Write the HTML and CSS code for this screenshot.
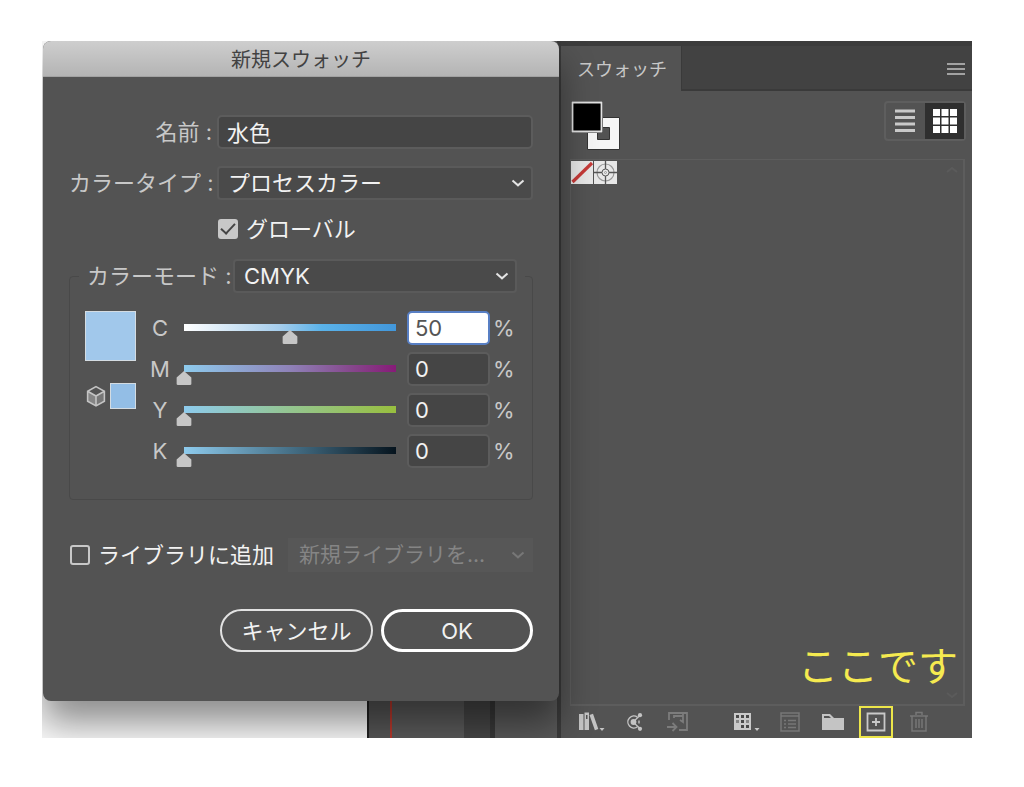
FILE: index.html
```html
<!DOCTYPE html>
<html lang="ja">
<head>
<meta charset="utf-8">
<meta name="viewport" content="width=device-width, initial-scale=1">
<title>新規スウォッチ</title>
<link rel="stylesheet" href="styles.css">
</head>
<body>
<main class="workspace">
  <div class="canvas">
    <form class="dialog">
      <h1 class="dialog-title">新規スウォッチ</h1>
      <div class="dialog-body">
        <div class="field-row">
          <label class="field-label" for="name">名前 :</label>
          <input class="text-field" id="name" type="text" value="水色">
        </div>
        <div class="field-row type-row">
          <label class="field-label" for="type">カラータイプ :</label>
          <div class="picker">
            <select id="type"><option>プロセスカラー</option></select>
            <svg class="chevron" viewBox="0 0 14 8"><path d="M1.500 1.500 7 6.300l5.500-4.800"/></svg>
          </div>
        </div>
        <div class="check-row">
          <input class="check" id="global" type="checkbox" checked>
          <label for="global">グローバル</label>
        </div>

        <fieldset class="mode">
          <legend>
            <div class="mode-head">
              <label class="mode-label" for="mode">カラーモード :</label>
              <div class="picker">
                <select id="mode"><option>CMYK</option></select>
                <svg class="chevron" viewBox="0 0 14 8"><path d="M1.500 1.500 7 6.300l5.500-4.800"/></svg>
              </div>
            </div>
          </legend>
          <div class="mode-body">
            <div class="previews">
              <div class="preview-large"></div>
              <div class="preview-line">
                <svg class="cube" viewBox="0 0 20 21"><path class="cube-side" d="M10 10.500 18 6v9.500l-8 4.500z"/><path class="cube-left" d="M10 10.500 2 6v9.500l8 4.500z"/><path class="cube-line" d="M10 1.500 18 6v9.500l-8 4.500-8-4.500V6zM2 6l8 4.500L18 6M10 10.500V20"/></svg>
                <div class="preview-small"></div>
              </div>
            </div>
            <div class="channels">
              <div class="channel">
                <label for="c">C</label>
                <input class="slider cyan" type="range" min="0" max="100" value="50" aria-label="C">
                <input class="amount active" id="c" type="text" value="50">
                <span>%</span>
              </div>
              <div class="channel">
                <label for="m">M</label>
                <input class="slider magenta" type="range" min="0" max="100" value="0" aria-label="M">
                <input class="amount" id="m" type="text" value="0">
                <span>%</span>
              </div>
              <div class="channel">
                <label for="y">Y</label>
                <input class="slider yellow" type="range" min="0" max="100" value="0" aria-label="Y">
                <input class="amount" id="y" type="text" value="0">
                <span>%</span>
              </div>
              <div class="channel">
                <label for="k">K</label>
                <input class="slider black" type="range" min="0" max="100" value="0" aria-label="K">
                <input class="amount" id="k" type="text" value="0">
                <span>%</span>
              </div>
            </div>
          </div>
        </fieldset>

        <div class="library-row">
          <input class="check" id="library" type="checkbox">
          <label for="library">ライブラリに追加</label>
          <div class="picker disabled">
            <select disabled aria-label="ライブラリ"><option>新規ライブラリを...</option></select>
            <svg class="chevron" viewBox="0 0 14 8"><path d="M1.500 1.500 7 6.300l5.500-4.800"/></svg>
          </div>
        </div>

        <div class="actions">
          <button class="pill" type="button">キャンセル</button>
          <button class="pill primary" type="button">OK</button>
        </div>
      </div>
    </form>
  </div>

  <section class="panel">
    <header class="tabs">
      <button class="tab" type="button">スウォッチ</button>
      <button class="menu" type="button" aria-label="メニュー">
        <svg width="18" height="14" viewBox="0 0 18 14"><path d="M0 2h18M0 7h18M0 12h18" stroke="#a2a2a2" stroke-width="1.800"/></svg>
      </button>
    </header>
    <div class="panel-head">
      <svg width="50" height="50" viewBox="0 0 50 50">
        <path d="M16.500 16.500h32v32h-32z" fill="#f5f5f5" stroke="#333"/>
        <path d="M26.500 26.500h12v12h-12z" fill="#535353" stroke="#333"/>
        <path d="M0 0h32v32H0z" fill="#333"/>
        <path d="M1.500 1.500h29v29h-29z" fill="#000" stroke="#e2e2e2" stroke-width="1.800"/>
      </svg>
      <div class="views">
        <button class="view" type="button" aria-label="リスト表示">
          <svg width="24" height="26" viewBox="0 0 24 26"><path d="M1 3h20M1 9.500h20M1 16h20M1 22.500h20" stroke="#c9c9c9" stroke-width="3"/></svg>
        </button>
        <button class="view selected" type="button" aria-label="サムネイル表示">
          <svg width="24" height="24" viewBox="0 0 24 24" fill="#fff"><path d="M0 0h7v7H0zM8.500 0h7v7h-7zM17 0h7v7h-7zM0 8.500h7v7H0zM8.500 8.500h7v7h-7zM17 8.500h7v7h-7zM0 17h7v7H0zM8.500 17h7v7h-7zM17 17h7v7h-7z"/></svg>
        </button>
      </div>
    </div>
    <div class="swatches">
      <div class="swatch-line">
        <svg width="46" height="23" viewBox="0 0 46 23">
          <path d="M0 0h22v23H0zM23 0h23v23H23z" fill="#e8e8e8"/>
          <path d="M1.500 21 21 2" stroke="#c63a38" stroke-width="3.200"/>
          <g fill="none" stroke="#555"><circle cx="34.500" cy="11.500" r="8.500" stroke="#999" stroke-width="1.200"/><circle cx="34.500" cy="11.500" r="3.500"/><circle cx="34.500" cy="11.500" r="1" stroke="#999"/><path d="M34.500 0v8M34.500 15v8M23 11.500h8M38 11.500h8" stroke-width="1.300"/></g>
        </svg>
        <svg class="scroll-mark" width="12" height="8" viewBox="0 0 12 8"><path d="m1 6 5-4 5 4"/></svg>
      </div>
      <div class="swatch-foot">
        <p class="note">ここです</p>
        <svg class="scroll-mark" width="12" height="8" viewBox="0 0 12 8"><path d="m1 2 5 4 5-4"/></svg>
      </div>
    </div>
    <footer class="tools">
      <div class="tool-group">
        <button class="tool" type="button" aria-label="スウォッチライブラリ">
          <svg width="28" height="22" viewBox="0 0 28 22" fill="#c4c4c4"><path d="M1 3h4.500v16H1zM6.500 1.500h4.500V19H6.500zM11.500 4l3.500-1.200L20.300 18l-3.400 1.200z"/><path d="M8 4h1.500v4H8z" fill="#535353"/><path d="M21.500 17h5l-2.500 3z"/></svg>
        </button>
        <button class="tool" type="button" aria-label="カラーテーマ">
          <svg width="20" height="22" viewBox="0 0 20 22" fill="none" stroke="#c4c4c4"><path d="M12.500 6.200A6 6 0 1 0 12.500 15.800M14 9.500v3" stroke-width="1.400"/><path d="m8 11 7-6.500M8 11l7 6.500" stroke-width="1.200"/><circle cx="8.500" cy="11" r="2.900" fill="#c4c4c4" stroke="none"/><circle cx="15" cy="4.200" r="2.100" fill="#c4c4c4" stroke="none"/><circle cx="15" cy="17.800" r="2.100" fill="#c4c4c4" stroke="none"/></svg>
        </button>
        <button class="tool dim" type="button" aria-label="ライブラリに追加">
          <svg width="24" height="22" viewBox="0 0 24 22" fill="none" stroke="#7c7c7c" stroke-width="1.800"><path d="M3 9V2h18v17h-8M8 7V5h9v5M17 3v8l-3-2M1 16h9M6.500 12l4 4-4 4"/></svg>
        </button>
      </div>
      <div class="tool-group">
        <button class="tool" type="button" aria-label="スウォッチの種類">
          <svg width="28" height="22" viewBox="0 0 28 22"><path d="M1 2h17v17H1z" fill="#c9c9c9"/><path d="M3 4h3v3H3zM8 4h3v3H8zM13 4h3v3h-3zM8 9h3v3H8zM13 14h3v3h-3zM8 14h3v3H8z" fill="#484848"/><path d="M3 9h3v3H3zM13 9h3v3h-3z" fill="#858585"/><path d="M21.500 17h5l-2.500 3z" fill="#c9c9c9"/></svg>
        </button>
        <button class="tool dim" type="button" aria-label="スウォッチオプション">
          <svg width="20" height="20" viewBox="0 0 20 20" fill="none" stroke="#777" stroke-width="1.500"><path d="M1 1h18v18H1zM1 4h18M4 8.500h2M8 8.500h8M4 12h2M8 12h8M4 15.500h2M8 15.500h8"/></svg>
        </button>
        <button class="tool" type="button" aria-label="新規カラーグループ">
          <svg width="24" height="20" viewBox="0 0 24 20" fill="#c4c4c4"><path d="M1 2h8l4 4h10v12H1z"/><path d="M3 4h5l2 2H3z" fill="#535353"/></svg>
        </button>
        <button class="tool marked" type="button" aria-label="新規スウォッチ">
          <svg width="20" height="20" viewBox="0 0 20 20" fill="none" stroke="#c9c9c9" stroke-width="1.800"><path d="M1.500 1.500h17v17h-17zM10 6v8M6 10h8"/></svg>
        </button>
        <button class="tool dim" type="button" aria-label="スウォッチを削除">
          <svg width="20" height="22" viewBox="0 0 20 22" fill="none" stroke="#777" stroke-width="1.500"><path d="M1 5h18M3 5v15h14V5M7 4V1.500h6V4M7 8v9M10 8v9M13 8v9"/></svg>
        </button>
      </div>
    </footer>
  </section>
</main>
</body>
</html>
```
FILE: styles.css
```css
* {
  box-sizing: border-box;
}

body {
  margin: 0;
  padding: 41px 52px 48px 42px;
  background: #fff;
  color: #c8c8c8;
  font: 22px/30px Inter, "Noto Sans CJK JP", sans-serif;
}

button,
input,
select {
  margin: 0;
  font: inherit;
  color: inherit;
}

button {
  padding: 0;
  border: 0;
  background: none;
}

svg {
  display: block;
}

.workspace {
  display: grid;
  grid-template-columns: minmax(500px, 519fr) minmax(0, 411fr);
  overflow: hidden;
}

/* Artboard, pasteboard and docked strips behind the dialog */
.canvas {
  z-index: 1;
  padding: 0 2px 37px 1px;
  background: linear-gradient(90deg, #fafafa 325px, #222 325px 327px, #565656 327px 348px, #b8382c 348px 350px, #5a5a5a 350px 422px, #464646 422px 448px, #383838 448px 453px, #585858 453px 515px, #3a3a3a 515px);
}

.dialog {
  border-radius: 8px;
  background: #535353;
  box-shadow: 0 22px 36px rgba(0, 0, 0, 0.44);
}

.dialog-title {
  margin: 0;
  padding: 5px 0 1px;
  border-radius: 8px 8px 0 0;
  border-bottom: 1px solid #a2a2a2;
  background: linear-gradient(#cecece, #b4b4b4);
  color: #424242;
  font-size: 20px;
  font-weight: 400;
  line-height: 29px;
  text-align: center;
}

.dialog-body {
  padding: 38px 26px 49px;
}

.field-row {
  display: grid;
  grid-template-columns: 148px minmax(0, 1fr);
  align-items: center;
}

.field-label {
  padding-right: 5px;
  text-align: right;
  white-space: nowrap;
}

.type-row {
  margin-top: 17px;
}

.text-field,
.amount {
  width: 100%;
  height: 34px;
  border: 2px solid #5c5c5c;
  border-radius: 5px;
  background: #454545;
  color: #f2f2f2;
}

.text-field {
  padding: 0 8px 3px;
}

.picker {
  display: grid;
  align-items: center;
}

.picker select,
.chevron {
  grid-area: 1 / 1;
}

.picker select {
  width: 100%;
  height: 34px;
  padding: 0 32px 0 9px;
  border: 2px solid #5a5a5a;
  border-radius: 4px;
  appearance: none;
  background: #4a4a4a;
  color: #f2f2f2;
  opacity: 1;
}

.chevron {
  justify-self: end;
  width: 14px;
  height: 8px;
  margin-right: 8px;
  fill: none;
  stroke: #e4e4e4;
  stroke-width: 2;
  pointer-events: none;
}

.check-row,
.library-row {
  display: flex;
  align-items: center;
  gap: 8px;
  color: #f2f2f2;
}

.check-row {
  margin: 14px 0 15px;
  padding-left: 149px;
}

.check {
  display: grid;
  place-items: center;
  width: 20px;
  height: 20px;
  border: 2px solid #c8c8c8;
  border-radius: 3px;
  appearance: none;
}

.check:checked {
  background: #c8c8c8;
}

.check:checked::before {
  content: "";
  width: 12px;
  height: 6px;
  border: solid #444;
  border-width: 0 0 2px 2px;
  transform: translateY(-2px) rotate(-47deg);
}

.mode {
  min-width: 0;
  margin: 0;
  padding: 18px 20px 31px 15px;
  border: 1px solid #494949;
  border-radius: 4px;
}

.mode legend {
  width: calc(100% + 19px);
  margin-left: -6px;
  padding: 0 8px;
}

.mode-head {
  display: grid;
  grid-template-columns: 146px minmax(0, 1fr);
  align-items: center;
}

.mode-label {
  white-space: nowrap;
}

.mode-body {
  display: flex;
  gap: 11px;
}

.previews {
  display: grid;
  align-content: start;
  gap: 22px;
  width: 51px;
}

.preview-large,
.preview-small {
  border: 1px solid #d4dce2;
}

.preview-large {
  height: 50px;
  background: #a1c8eb;
}

.preview-line {
  display: flex;
  align-items: center;
  justify-content: space-between;
}

.preview-small {
  width: 26px;
  height: 26px;
  background: #93bee6;
}

.cube {
  width: 22px;
  height: 22px;
}

.cube-side {
  fill: #777;
}

.cube-left {
  fill: #858585;
}

.cube-line {
  fill: none;
  stroke: #c4c4c4;
  stroke-width: 1.500;
}

.channels {
  display: grid;
  flex: 1;
  gap: 7px;
}

.channel {
  display: grid;
  grid-template-columns: 26px minmax(0, 1fr) 83px 19px;
  column-gap: 3px;
  align-items: center;
}

.channel label {
  text-align: center;
}

.slider {
  align-self: start;
  width: 100%;
  height: 20px;
  margin-top: 13px;
  appearance: none;
  background: none;
}

.slider::-webkit-slider-runnable-track {
  height: 20px;
  background: var(--ramp) 8px 0 / calc(100% - 16px) 7px no-repeat;
}

.slider::-webkit-slider-thumb {
  width: 16px;
  height: 14px;
  margin-top: 6px;
  appearance: none;
  background: #c6c6c6;
  clip-path: polygon(50% 0, 96% 46%, 96% 94%, 90% 100%, 10% 100%, 4% 94%, 4% 46%);
}

.cyan {
  --ramp: linear-gradient(90deg, #fff, #a5cdec 45%, #5ab2e9 65%, #4297db);
}

.magenta {
  --ramp: linear-gradient(90deg, #8ecbed, #8f82b8 50%, #86458b 80%, #871b78);
}

.yellow {
  --ramp: linear-gradient(90deg, #8ecbed, #94c590 50%, #98bf3f);
}

.black {
  --ramp: linear-gradient(90deg, #8ecbed, #467087 50%, #06141e);
}

.amount {
  padding: 0 6px;
}

.amount.active {
  border-color: #587fc4;
  background: #fff;
  color: #555;
}

.library-row {
  margin-top: 38px;
  padding-left: 1px;
}

.library-row label {
  white-space: nowrap;
}

.library-row .picker {
  flex: 1;
  margin-left: 6px;
}

.picker.disabled select {
  border-color: #575757;
  border-radius: 0;
  background: #575757;
  color: #858585;
  font-size: 21px;
}

.disabled .chevron {
  stroke: #777;
}

.actions {
  display: grid;
  grid-template-columns: 153px 152px;
  justify-content: end;
  gap: 8px;
  margin-top: 37px;
}

.pill {
  height: 43px;
  border: 2px solid #e2e2e2;
  border-radius: 22px;
  color: #f2f2f2;
}

.pill.primary {
  border: 3px solid #fff;
}

.panel {
  display: flex;
  flex-direction: column;
  min-width: 0;
  border-top: 5px solid #3c3c3c;
  background: #535353;
}

.tabs {
  display: flex;
  align-items: stretch;
  justify-content: space-between;
  height: 45px;
  background: linear-gradient(#424242 43px, #3a3a3a 43px);
}

.tab {
  width: 121px;
  padding: 2px 0 0 2px;
  border-right: 1px solid #3a3a3a;
  background: #535353;
  font-size: 18px;
}

.menu {
  padding: 0 7px;
}

.panel-head {
  display: flex;
  align-items: flex-start;
  justify-content: space-between;
  padding: 10px 6px 8px 10px;
}

.views {
  display: flex;
  border: 2px solid #5e5e5e;
  border-radius: 4px;
}

.view {
  display: grid;
  place-items: center;
  width: 39px;
  height: 36px;
}

.view.selected {
  background: #2f2f2f;
}

.swatches {
  display: flex;
  flex: 1;
  flex-direction: column;
  justify-content: space-between;
  margin: 0 7px 0 9px;
  border: 2px solid #5d5d5d;
  border-width: 1px 2px 2px 1px;
}

.swatch-line {
  display: flex;
  justify-content: space-between;
  padding: 1px 5px 0 0;
}

.swatch-foot {
  display: grid;
  justify-items: end;
  padding: 0 5px 5px 0;
}

.note {
  margin: 0;
  color: #f5ea50;
  font-size: 40px;
  line-height: 48px;
}

.scroll-mark {
  fill: none;
  stroke: #5b5b5b;
  stroke-width: 2;
}

.swatch-line .scroll-mark {
  margin-top: 5px;
}

.tools {
  display: flex;
  justify-content: space-between;
  padding: 0 36px 0 14px;
}

.tool-group {
  display: flex;
  gap: 9px;
}

.tool {
  display: grid;
  place-items: center;
  width: 34px;
  height: 32px;
}

.tool.marked {
  border: 2px solid #ede64a;
}
```
